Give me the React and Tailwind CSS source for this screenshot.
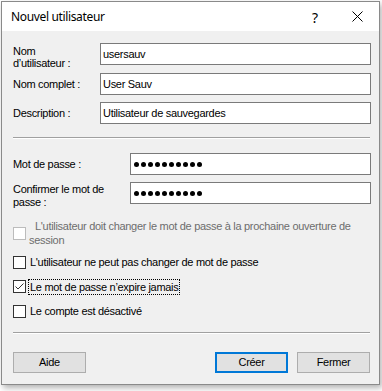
import React from "react";

const F = { fontFamily: '"Liberation Sans", Arial, sans-serif' };

function TextBox({ value, password }) {
  return (
    <div className="h-[22px] flex-1 border border-[#7a7a7a] bg-white flex items-center pl-[2px] text-[11px] text-black">
      {password ? (
        <div className="flex gap-[2px] pl-[1px]">
          {Array.from({ length: 10 }).map((_, i) => (
            <span key={i} className="block w-[5px] h-[5px] rounded-full bg-black" />
          ))}
        </div>
      ) : (
        <span className="leading-none">{value}</span>
      )}
    </div>
  );
}

function Check({ checked, disabled }) {
  return (
    <div
      className={
        "w-[13px] h-[13px] shrink-0 border bg-white flex items-center justify-center " +
        (disabled ? "border-[#bcbcbc]" : "border-[#333333]")
      }
    >
      {checked && (
        <svg width="11" height="11" viewBox="0 0 11 11">
          <polyline points="1.5,5.5 4,8 9.5,2.5" fill="none" stroke="#333" strokeWidth="1" />
        </svg>
      )}
    </div>
  );
}

function Sep() {
  return (
    <div className="mr-[1px]">
      <div className="h-[1px] bg-[#a0a0a0]" />
      <div className="h-[1px] bg-white" />
    </div>
  );
}

export default function App() {
  return (
    <div className="w-[382px] h-[391px] bg-white overflow-hidden tracking-[-0.3px]" style={F}>
      <div className="h-[1px]" />
      <div className="ml-[1px] w-[379px] h-[384px] border border-[#8a8a8a] bg-[#f0f0f0] shadow-[2px_3px_6px_rgba(0,0,0,0.3)] flex flex-col">
        <div className="h-[29px] bg-white flex items-center shrink-0 tracking-normal">
          <div
            className="ml-[9px] text-[12px] text-black flex-1 pt-[1px] tracking-[-0.35px]"
            style={{ fontFamily: '"Noto Sans", "Open Sans", sans-serif' }}
          >
            Nouvel utilisateur
          </div>
          <div
            className="text-[14px] text-black mr-[34px] pt-[1px]"
            style={{ fontFamily: '"Noto Sans", sans-serif' }}
          >
            ?
          </div>
          <svg width="11" height="11" viewBox="0 0 11 11" className="mr-[16px]">
            <path d="M0.5 0.5 L10.5 10.5 M10.5 0.5 L0.5 10.5" stroke="#000" strokeWidth="1" />
          </svg>
        </div>

        <div className="pl-[11px] pr-[8px] pt-[12px] text-[11px] text-black flex flex-col">
          <div className="flex h-[22px]">
            <div className="w-[87px] leading-[12px] pt-[2px]">
              Nom
              <br />
              d’utilisateur :
            </div>
            <TextBox value="usersauv" />
          </div>
          <div className="flex mt-[8px] h-[22px] items-center">
            <div className="w-[87px]">Nom complet :</div>
            <TextBox value="User Sauv" />
          </div>
          <div className="flex mt-[7px] h-[22px] items-center">
            <div className="w-[87px]">Description :</div>
            <TextBox value="Utilisateur de sauvegardes" />
          </div>

          <div className="mt-[13px]">
            <Sep />
          </div>

          <div className="flex mt-[14px] h-[22px] items-center">
            <div className="w-[117px]">Mot de passe :</div>
            <TextBox password />
          </div>
          <div className="flex mt-[7px] h-[22px]">
            <div className="w-[117px] leading-[13px] pt-[1px]">
              Confirmer le mot de
              <br />
              passe :
            </div>
            <TextBox password />
          </div>

          <div className="flex mt-[15px] items-center h-[28px]">
            <Check disabled />
            <div className="ml-[3px] text-[#6d6d6d] leading-[14px]">
              <div className="whitespace-nowrap pl-[6px]">
                L'utilisateur doit changer le mot de passe à la prochaine ouverture de
              </div>
              <div>session</div>
            </div>
          </div>

          <div className="flex mt-[9px] items-center h-[13px]">
            <Check />
            <div className="ml-[4px]">L'utilisateur ne peut pas changer de mot de passe</div>
          </div>

          <div className="flex mt-[11px] items-center h-[13px]">
            <Check checked />
            <div className="ml-[2px] border border-dotted border-black px-[1px] leading-[14px]">
              Le mot de passe n’expire jamais
            </div>
          </div>

          <div className="flex mt-[12px] items-center h-[13px]">
            <Check />
            <div className="ml-[4px]">Le compte est désactivé</div>
          </div>

          <div className="mt-[14px]">
            <Sep />
          </div>

          <div className="flex mt-[18px] pr-[1px]">
            <button className="w-[73px] h-[21px] bg-[#e1e1e1] border border-[#adadad] text-[11px] text-black">
              Aide
            </button>
            <div className="flex-1" />
            <button className="w-[73px] h-[21px] bg-[#e1e1e1] border-2 border-[#0078d7] text-[11px] text-black">
              Créer
            </button>
            <button className="ml-[9px] w-[73px] h-[21px] bg-[#e1e1e1] border border-[#adadad] text-[11px] text-black">
              Fermer
            </button>
          </div>
        </div>
      </div>
    </div>
  );
}
